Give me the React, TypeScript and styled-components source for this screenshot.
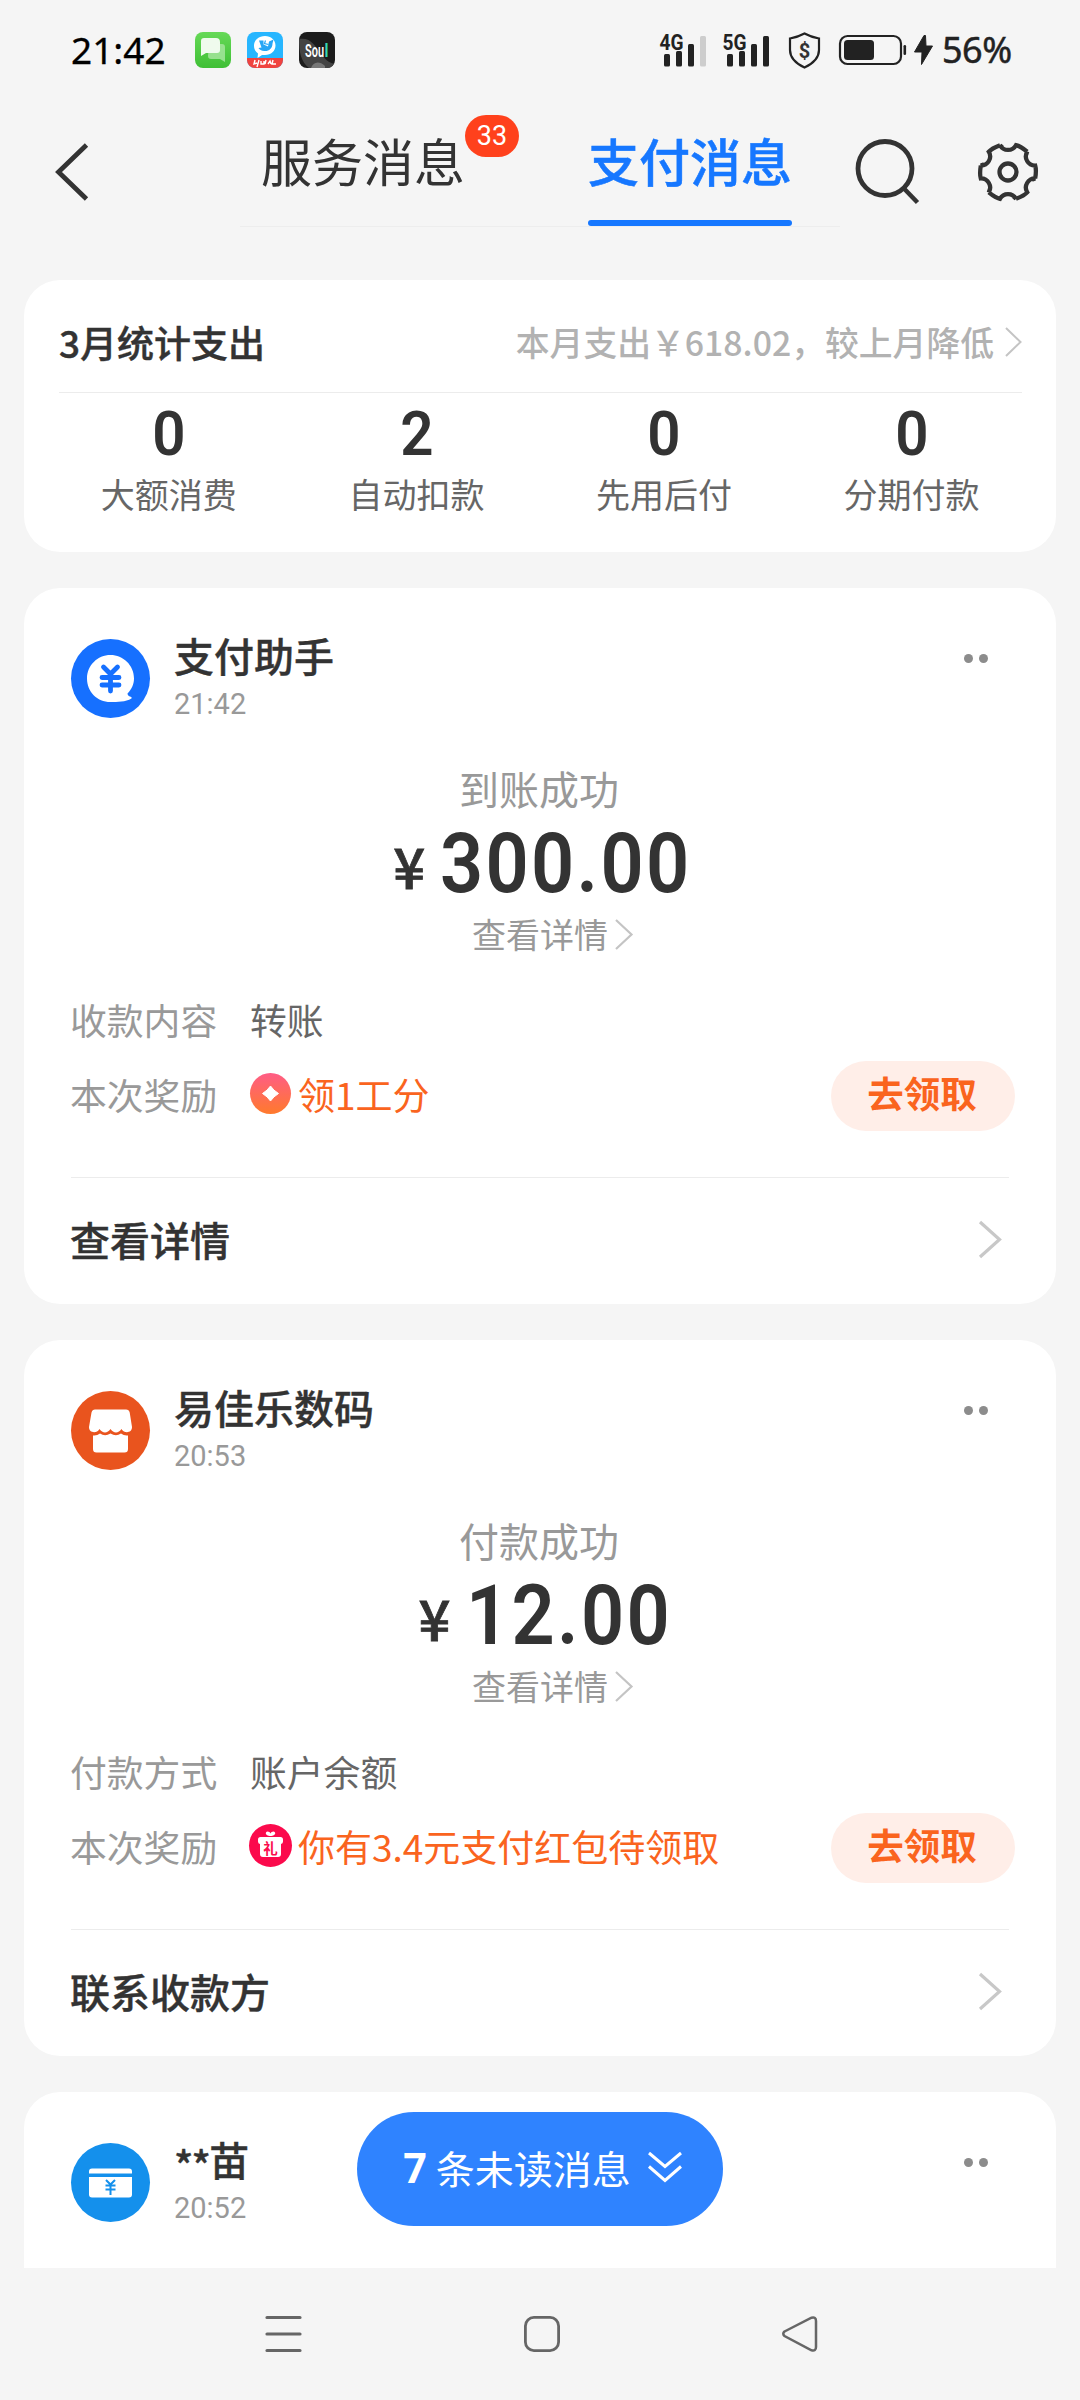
import React from "react";
import styled, { createGlobalStyle } from "styled-components";

const cjk = `"Noto Sans CJK SC", "Noto Sans", sans-serif`;
const latin = `Roboto, "Noto Sans CJK SC", sans-serif`;

const GlobalStyle = createGlobalStyle`
  * { box-sizing: border-box; }
  body { margin: 0; background: #f5f5f5; font-family: ${cjk}; color: #333; }
  svg { display: block; flex: none; overflow: visible; }
`;

const Screen = styled.div`
  position: relative;
  width: 1080px;
  height: 2400px;
  display: flex;
  flex-direction: column;
  background: #f5f5f5;
  overflow: hidden;
  white-space: nowrap;
`;

/* ---------- status bar ---------- */
const StatusBar = styled.header`
  height: 100px;
  padding: 0 67px 0 71px;
  display: flex;
  align-items: center;
  flex: none;
`;
const Clock = styled.span`
  width: 124px;
  font: 400 37px/50px "Noto Sans", sans-serif;
  -webkit-text-stroke: 0.3px #000;
  color: #000;
`;
const AppIcons = styled.div`
  display: flex;
  gap: 16px;
  flex: 1;
`;
const Indicators = styled.div`
  display: flex;
  align-items: center;
`;
const Percent = styled.span`
  width: 71px;
  margin-left: 9px;
  font: 400 36px/50px "Noto Sans", sans-serif;
  letter-spacing: -0.5px;
  -webkit-text-stroke: 0.5px #222;
  color: #222;
`;
const Gap = styled.span<{ $w: number }>`
  width: ${(p) => p.$w}px;
`;

/* ---------- navigation ---------- */
const NavBar = styled.nav`
  height: 144px;
  display: flex;
  align-items: center;
  padding: 0 40px 0 55px;
  flex: none;
`;
const Tabs = styled.div`
  margin-left: 152px;
  width: 600px;
  height: 144px;
  display: flex;
  align-items: flex-start;
  padding-left: 20px;
  background: linear-gradient(#ededed, #ededed) 0 126px / 100% 1px no-repeat;
`;
const Tab = styled.div<{ $active?: boolean }>`
  position: relative;
  width: 204px;
  height: 126px;
  margin-right: ${(p) => (p.$active ? 0 : 123)}px;
  margin-left: ${(p) => (p.$active ? 0 : 1)}px;
  padding-top: 22px;
  font-size: 51px;
  line-height: 76px;
  text-align: center;
  font-weight: ${(p) => (p.$active ? 500 : 400)};
  -webkit-text-stroke: ${(p) => (p.$active ? "0.5px" : "0")};
  color: ${(p) => (p.$active ? "#1677ff" : "#333")};
  &::after {
    content: "";
    display: ${(p) => (p.$active ? "block" : "none")};
    height: 6px;
    margin-top: 22px;
    border-radius: 3px;
    background: #1677ff;
  }
`;
const Badge = styled.span`
  position: absolute;
  left: 204px;
  top: 15px;
  width: 54px;
  height: 42px;
  border-radius: 21px;
  background: #ff411c;
  color: #fff;
  font: 400 27px/43px ${latin};
`;
const NavIcons = styled.div`
  display: flex;
  align-items: center;
  gap: 59px;
  margin-left: 13px;
`;

/* ---------- cards ---------- */
const Feed = styled.main`
  height: 2024px;
  padding: 36px 24px 0;
  display: flex;
  flex-direction: column;
  gap: 36px;
  overflow: hidden;
  flex: none;
`;
const Card = styled.section<{ $h: number; $pad: string }>`
  height: ${(p) => p.$h}px;
  padding: ${(p) => p.$pad};
  border-radius: 36px;
  background: #fff;
  flex: none;
`;
const SummaryHead = styled.div`
  height: 113px;
  display: flex;
  align-items: center;
  justify-content: space-between;
  padding-top: 12px;
  border-bottom: 1px solid #ececec;
`;
const SummaryTitle = styled.h2`
  margin: 0;
  font-size: 37px;
  line-height: 52px;
  font-weight: 500;
  -webkit-text-stroke: 0.4px;
`;
const SummaryNote = styled.div`
  display: flex;
  align-items: center;
  gap: 11px;
  font-size: 33.8px;
  line-height: 50px;
  font-weight: 500;
  color: #b2b2b2;
`;
const Stats = styled.div`
  display: grid;
  grid-template-columns: repeat(4, 247.6px);
  margin-left: -14px;
  text-align: center;
`;
const StatValue = styled.div`
  margin-top: 12px;
  height: 58px;
  font: 600 62px/58px ${latin};
  transform: scaleX(0.94);
`;
const StatLabel = styled.div`
  margin-top: 6px;
  font-size: 34px;
  line-height: 50px;
  color: #666;
`;

const MsgHead = styled.div`
  display: flex;
  height: 79px;
`;
const Who = styled.div`
  flex: 1;
  margin-left: 24px;
`;
const Name = styled.h3`
  margin: -13px 0 0;
  font-size: 40px;
  line-height: 58px;
  font-weight: 500;
  -webkit-text-stroke: 0.4px;
`;
const Mask = styled.span`
  display: inline-block;
  letter-spacing: -1.8px;
  transform: translateY(5px);
`;
const Time = styled.div`
  font: 400 29px/34px ${latin};
  margin-top: 3px;
  color: #999;
`;
const More = styled.div`
  display: flex;
  gap: 6px;
  margin: 15px 21px 0 0;
  &::before, &::after {
    content: "";
    width: 9px;
    height: 9px;
    border-radius: 50%;
    background: #8c8c8c;
  }
`;
const State = styled.div`
  margin: 47px 2px 0 0;
  height: 47px;
  font-size: 40px;
  line-height: 47px;
  text-align: center;
  color: #999;
`;
const Amount = styled.div`
  height: 100px;
  padding: 2px 0 0 33px;
  display: flex;
  justify-content: center;
  align-items: baseline;
`;
const Yen = styled.span`
  width: 47px;
  font-size: 56px;
  line-height: 92px;
  font-weight: 500;
  -webkit-text-stroke: 0.8px;
  transform: translateY(-3px);
`;
const Figure = styled.span`
  font: 600 84px/100px ${latin};
  letter-spacing: 2.6px;
  transform: scaleX(0.9);
  transform-origin: 0 50%;
`;
const Detail = styled.div`
  height: 44px;
  display: flex;
  align-items: center;
  justify-content: center;
  gap: 7px;
  padding-left: 25px;
  font-size: 34px;
  line-height: 44px;
  color: #999;
`;
const Rows = styled.div`
  margin-top: 25px;
  height: 197px;
  border-bottom: 1px solid #ececec;
`;
const Row = styled.div`
  display: flex;
  align-items: center;
  height: 75px;
  font-size: 36.8px;
  line-height: 54px;
  color: #666;
  margin: 0 -6px 0 -1px;
`;
const RowLabel = styled.span`
  width: 180px;
  color: #999;
`;
const Reward = styled.span`
  flex: 1;
  display: flex;
  align-items: center;
  gap: 7px;
  font-size: 37px;
  color: #fa641e;
`;
const Claim = styled.button`
  width: 184px;
  height: 70px;
  margin-top: 5px;
  border: 0;
  padding: 0 2px 6px 0;
  border-radius: 35px;
  background: #ffeee8;
  color: #fa641e;
  font: 700 36.5px/60px ${cjk};
`;
const Foot = styled.div`
  height: 122px;
  display: flex;
  align-items: center;
  justify-content: space-between;
  padding: 0 8px 0 0;
  margin-left: -1px;
  font-size: 40px;
  line-height: 58px;
  font-weight: 500;
  -webkit-text-stroke: 0.4px;
`;

const UnreadPill = styled.button`
  position: absolute;
  left: 357px;
  top: 2112px;
  width: 366px;
  height: 114px;
  border: 0;
  padding: 0 0 4px 5px;
  border-radius: 57px;
  background: #2f83ff;
  color: #fff;
  display: flex;
  align-items: center;
  justify-content: center;
  font: 400 39px/56px ${cjk};
`;
const Count = styled.b`
  font: 700 41px/56px "Noto Sans", sans-serif;
  margin-right: 9px;
`;

const SystemNav = styled.footer`
  height: 132px;
  display: flex;
  align-items: center;
  justify-content: space-between;
  padding: 0 262px 0 265px;
`;

/* ---------- icons ---------- */
const Chevron = ({ w, h, s, c }: { w: number; h: number; s: number; c: string }) => (
  <svg width={w} height={h} viewBox={`0 0 ${w} ${h}`} fill="none" stroke={c} strokeWidth={s}>
    <path d={`M1 1 L${w - 1.5} ${h / 2} L1 ${h - 1}`} />
  </svg>
);

const ChatApp = () => (
  <svg width="36" height="36" viewBox="0 0 36 36">
    <defs>
      <linearGradient id="chat" x1="0" y1="0" x2="0" y2="1">
        <stop offset="0" stopColor="#66d957" />
        <stop offset="1" stopColor="#3fbf35" />
      </linearGradient>
    </defs>
    <rect width="36" height="36" rx="8" fill="url(#chat)" />
    <path d="M14 12h13q3 0 3 3v15l-5-3H16q-3 0-3-3z" fill="#a5e59c" opacity=".85" />
    <path d="M9 6h12q4 0 4 4v8q0 3-3 3H11l-5 3V9q0-3 3-3z" fill="#effbed" />
  </svg>
);

const BirdApp = () => (
  <svg width="36" height="36" viewBox="0 0 36 36">
    <defs>
      <clipPath id="bird"><rect width="36" height="36" rx="8" /></clipPath>
    </defs>
    <g clipPath="url(#bird)">
      <rect width="36" height="36" fill="#27b6ff" />
      <rect y="26" width="36" height="10" fill="#f0433f" />
      <path d="M18 4c6 0 10.500 4 10.500 9.500S24 23 18 23l-3 0-4.500 3 .5-4.500C8 19.500 7 16.500 7 13.500 7 8 12 4 18 4z" fill="#fff" />
      <path d="M12 8.500h4.500v4l4.500 2 1-5 4.500-2-1 4c0 5-4 8-8 7.500-3 0-5.500-1.500-6-3l3-.5z" fill="#27a6f5" />
      <path d="M18.500 8.500l-1 3 4 1" stroke="#27a6f5" strokeWidth="1.200" fill="none" />
      <path d="M8 28l-1 4 3-1M12 28l-2 7M14 29v3h3v-3M19 28l-1 4M21 32l2-3 1 3M26 28l-1 4h4" stroke="#fff" strokeWidth="1.400" fill="none" />
    </g>
  </svg>
);

const SoulApp = () => (
  <svg width="36" height="36" viewBox="0 0 36 36">
    <defs>
      <clipPath id="soul"><rect width="36" height="36" rx="8" /></clipPath>
    </defs>
    <g clipPath="url(#soul)">
      <rect width="36" height="36" fill="#1c1c1c" />
      <path d="M0 7C12 5 16 14 22 22s10 9 14 10v4H10C2 30 0 20 0 7z" fill="#444" />
      <path d="M12 36c2-6 8-8 14-2v2z" fill="#777" />
    </g>
    <g fontFamily="Roboto, sans-serif" fontWeight="600" fontSize="18.500">
      <text x="6" y="25" fill="#fff" textLength="19" lengthAdjust="spacingAndGlyphs">Sou</text>
      <text x="25.500" y="25" fill="#36d9b5" textLength="4" lengthAdjust="spacingAndGlyphs">l</text>
    </g>
  </svg>
);

const Signal = ({ label, off }: { label: string; off?: boolean }) => (
  <svg width="47" height="34" viewBox="0 0 47 34" fill="#222">
    <text x="-.5" y="16.500" fontFamily="Roboto, sans-serif" fontWeight="700" fontSize="22" textLength="24" lengthAdjust="spacingAndGlyphs">{label}</text>
    <rect x="4" y="21" width="6" height="12.500" rx="1.500" />
    <rect x="16" y="18" width="6" height="15.500" rx="1.500" />
    <rect x="28" y="11" width="6" height="22.500" rx="1.500" />
    <rect x="40" y="3" width="6" height="30.500" rx="1.500" fill={off ? "#cdcdcd" : "#222"} />
  </svg>
);

const Shield = () => (
  <svg width="33" height="37" viewBox="0 0 33 37">
    <path d="M16.500 1.500 Q23 5 31 6.500 V18 C31 27 24 32 16.500 35.500 C9 32 2 27 2 18 V6.500 Q10 5 16.500 1.500z" fill="none" stroke="#222" strokeWidth="2.200" />
    <text x="16.500" y="25.500" textAnchor="middle" fontFamily="Roboto, sans-serif" fontWeight="700" fontSize="20" fill="#333">$</text>
  </svg>
);

const Battery = () => (
  <svg width="68" height="30" viewBox="0 0 68 30" fill="#222">
    <rect x="1" y="1" width="61" height="28" rx="7.500" fill="none" stroke="#222" strokeWidth="2.200" />
    <rect x="5" y="5" width="30" height="20" rx="3.500" />
    <rect x="64.500" y="10" width="2.600" height="10" rx="1.300" />
  </svg>
);

const Bolt = () => (
  <svg width="19" height="30" viewBox="0 0 19 30" fill="#222">
    <path d="M10 .5 .5 17h7.500l-.5 12.500L18.500 11H12l-.5-10.500z" stroke="#222" strokeWidth="1" strokeLinejoin="round" />
  </svg>
);

const BackArrow = () => (
  <svg width="33" height="56" viewBox="0 0 33 56" fill="none" stroke="#333" strokeWidth="4.800">
    <path d="M31.500 1 3.500 28 31.500 55" />
  </svg>
);

const SearchIcon = () => (
  <svg width="66" height="66" viewBox="0 0 66 66" fill="none" stroke="#333" strokeWidth="4.800">
    <circle cx="32" cy="29.500" r="27" />
    <path d="M50.500 49 64.500 63.500" strokeWidth="4.500" />
  </svg>
);

const rotated = (x: number, y: number, deg: number) => {
  const a = (deg * Math.PI) / 180;
  return `${(x * Math.cos(a) - y * Math.sin(a)).toFixed(2)} ${(x * Math.sin(a) + y * Math.cos(a)).toFixed(2)}`;
};
const gearPath =
  [0, 60, 120, 180, 240, 300]
    .map((d, i) => `${i ? "L" : "M"}${rotated(-8, -26.8, d)} C${rotated(-4.5, -20.5, d)} ${rotated(4.5, -20.5, d)} ${rotated(8, -26.8, d)} Q${rotated(12.5, -25.8, d)} ${rotated(19.2, -20.3, d)}`)
    .join(" ") + "Z";
const GearIcon = () => (
  <svg width="60" height="60" viewBox="-30 -30 60 60" fill="none" stroke="#333" strokeWidth="4.300">
    <path d={gearPath} />
    <circle r="8.500" />
  </svg>
);

const PayAvatar = () => (
  <svg width="79" height="79" viewBox="0 0 79 79">
    <circle cx="39.500" cy="39.500" r="39.500" fill="#1670ff" />
    <path d="M39.500 16C52 16 63 26 63 39.500c0 6-2.500 11-6.500 15 0 2 1.500 3 4 3.500v1.500c-6 3.500-14 3.500-21 3.500C26 63 16 52.500 16 39.500S26.500 16 39.500 16z" fill="#fff" />
    <path d="M32.500 28l7 7L46.500 28M31 38.500h17M31 46h17M39.500 36v16" stroke="#1670ff" strokeWidth="4.800" strokeLinecap="round" fill="none" />
  </svg>
);

const ShopAvatar = () => (
  <svg width="79" height="79" viewBox="0 0 79 79">
    <circle cx="39.500" cy="39.500" r="39.500" fill="#e9541e" />
    <path d="M24 18.500h31q3 0 3.700 3L61 36c0 6-7.500 7-10.500 2-3 4.500-8 4.500-11 0-3 4.500-8 4.500-11 0-3 5-10.500 4-10.500-2l2.500-14.500q.8-3 3.500-3z" fill="#fff" />
    <path d="M22 44.500q4 .5 7-2 5 3.500 10.500 0 5.500 3.500 10.500 0 3 2.500 7 2V58q0 3.500-3.500 3.500h-28Q22 61.500 22 58z" fill="#fff" />
  </svg>
);

const CardAvatar = () => (
  <svg width="79" height="79" viewBox="0 0 79 79">
    <circle cx="39.500" cy="39.500" r="39.500" fill="#1490ec" />
    <path d="M18 30.500v-2q0-3 3-3h37q3 0 3 3v2z" fill="#fff" />
    <path d="M18 34h43v17.500q0 3-3 3H21q-3 0-3-3z" fill="#fff" />
    <path d="M35 37l4.500 4.500L44 37M34.500 42.500h10M34.500 46.500h10M39.500 42v10" stroke="#1490ec" strokeWidth="2" fill="none" />
  </svg>
);

const PointIcon = () => (
  <svg width="41" height="41" viewBox="0 0 41 41">
    <defs>
      <linearGradient id="point" x1="0" y1="0" x2="0" y2="1">
        <stop offset="0" stopColor="#ff5c86" />
        <stop offset="1" stopColor="#ff7a2c" />
      </linearGradient>
    </defs>
    <circle cx="20.500" cy="20.500" r="20.500" fill="url(#point)" />
    <path d="M20.500 13Q23.500 17.500 28.500 20.500 23.500 23.500 20.500 28 17.500 23.500 12.500 20.500 17.500 17.500 20.500 13z" fill="#fff" stroke="#fff" strokeLinejoin="round" />
  </svg>
);

const GiftIcon = () => (
  <svg width="41" height="43" viewBox="1 0 41 43">
    <circle cx="21.500" cy="21.500" r="21.500" fill="#fb0a4c" />
    <path d="M21.500 12C19 12 16 10.500 17 8.500c1-2 4-.5 4.500 1 .5-1.500 3.500-3 4.500-1 1 2-2 3.500-4.500 3.500z" fill="#fff" />
    <path d="M11.500 13h20q2.500 0 2.500 2.500v2q0 2-2 2.500v10q0 3-3 3H14q-3 0-3-3V20q-2-.5-2-2.500v-2q0-2.500 2.500-2.500z" fill="#fff" />
    <text x="21.500" y="29.500" textAnchor="middle" fontFamily="Noto Sans CJK SC, sans-serif" fontWeight="700" fontSize="14.500" fill="#fb0a4c">礼</text>
  </svg>
);

const ArrowSlot = styled.span`
  margin-left: 17px;
`;
const DoubleDown = () => (
  <ArrowSlot>
    <svg width="34" height="32" viewBox="0 0 34 32" fill="none" stroke="#fff" strokeWidth="3">
      <path d="M1 2 17 15.500 33 2M1 15.500 17 29.500 33 15.500" />
    </svg>
  </ArrowSlot>
);

type Message = {
  avatar: React.ReactNode;
  name: React.ReactNode;
  time: string;
  state: string;
  amount: string;
  label: string;
  value: string;
  rewardIcon: React.ReactNode;
  reward: string;
  action: string;
};

const messages: Message[] = [
  {
    avatar: <PayAvatar />, name: "支付助手", time: "21:42", state: "到账成功", amount: "300.00",
    label: "收款内容", value: "转账", rewardIcon: <PointIcon />, reward: "领1工分", action: "查看详情",
  },
  {
    avatar: <ShopAvatar />, name: "易佳乐数码", time: "20:53", state: "付款成功", amount: "12.00",
    label: "付款方式", value: "账户余额", rewardIcon: <GiftIcon />, reward: "你有3.4元支付红包待领取", action: "联系收款方",
  },
];

const stats = [
  ["0", "大额消费"],
  ["2", "自动扣款"],
  ["0", "先用后付"],
  ["0", "分期付款"],
];

const MessageHeader = ({ avatar, name, time }: Pick<Message, "avatar" | "name" | "time">) => (
  <MsgHead>
    {avatar}
    <Who>
      <Name>{name}</Name>
      <Time>{time}</Time>
    </Who>
    <More />
  </MsgHead>
);

export default function App() {
  return (
    <Screen>
      <GlobalStyle />
      <StatusBar>
        <Clock>21:42</Clock>
        <AppIcons>
          <ChatApp />
          <BirdApp />
          <SoulApp />
        </AppIcons>
        <Indicators>
          <Signal label="4G" off />
          <Gap $w={16} />
          <Signal label="5G" />
          <Gap $w={18} />
          <Shield />
          <Gap $w={18} />
          <Battery />
          <Gap $w={7} />
          <Bolt />
          <Percent>56%</Percent>
        </Indicators>
      </StatusBar>

      <NavBar>
        <BackArrow />
        <Tabs>
          <Tab>
            服务消息
            <Badge>33</Badge>
          </Tab>
          <Tab $active>支付消息</Tab>
        </Tabs>
        <NavIcons>
          <SearchIcon />
          <GearIcon />
        </NavIcons>
      </NavBar>

      <Feed>
        <Card $h={272} $pad="0 34px 0 35px">
          <SummaryHead>
            <SummaryTitle>3月统计支出</SummaryTitle>
            <SummaryNote>
              <span>本月支出￥618.02，较上月降低</span>
              <Chevron w={17} h={30} s={2} c="#c4c4c4" />
            </SummaryNote>
          </SummaryHead>
          <Stats>
            {stats.map(([value, label]) => (
              <div key={label}>
                <StatValue>{value}</StatValue>
                <StatLabel>{label}</StatLabel>
              </div>
            ))}
          </Stats>
        </Card>

        {messages.map((m) => (
          <Card key={m.action} $h={716} $pad="51px 47px 0">
            <MessageHeader avatar={m.avatar} name={m.name} time={m.time} />
            <State>{m.state}</State>
            <Amount>
              <Yen>¥</Yen>
              <Figure>{m.amount}</Figure>
            </Amount>
            <Detail>
              查看详情
              <Chevron w={18} h={31} s={2.2} c="#c4c4c4" />
            </Detail>
            <Rows>
              <Row>
                <RowLabel>{m.label}</RowLabel>
                {m.value}
              </Row>
              <Row>
                <RowLabel>本次奖励</RowLabel>
                <Reward>
                  {m.rewardIcon}
                  {m.reward}
                </Reward>
                <Claim>去领取</Claim>
              </Row>
            </Rows>
            <Foot>
              {m.action}
              <Chevron w={22} h={37} s={3.2} c="#c8c8c8" />
            </Foot>
          </Card>
        ))}

        <Card $h={716} $pad="51px 47px 0">
          <MessageHeader avatar={<CardAvatar />} name={<><Mask>**</Mask>苗</>} time="20:52" />
        </Card>
      </Feed>

      <UnreadPill>
        <Count>7</Count>
        条未读消息
        <DoubleDown />
      </UnreadPill>

      <SystemNav>
        <svg width="37" height="38" viewBox="0 0 37 38" stroke="#666" strokeWidth="3.200" strokeLinecap="round">
          <path d="M2 2.500H35M2 19H35M2 35.500H35" />
        </svg>
        <svg width="36" height="36" viewBox="0 0 36 36" fill="none" stroke="#666" strokeWidth="2.800">
          <rect x="1.400" y="1.400" width="33.200" height="33.200" rx="8.500" />
        </svg>
        <svg width="36" height="36" viewBox="0 0 36 36" fill="none" stroke="#666" strokeWidth="2.500">
          <path d="M2.500 15.500 29.500 1.700Q34 .5 34 5V31Q34 35.500 29.500 34.300L2.500 20Q0 17.800 2.500 15.500z" />
        </svg>
      </SystemNav>
    </Screen>
  );
}
